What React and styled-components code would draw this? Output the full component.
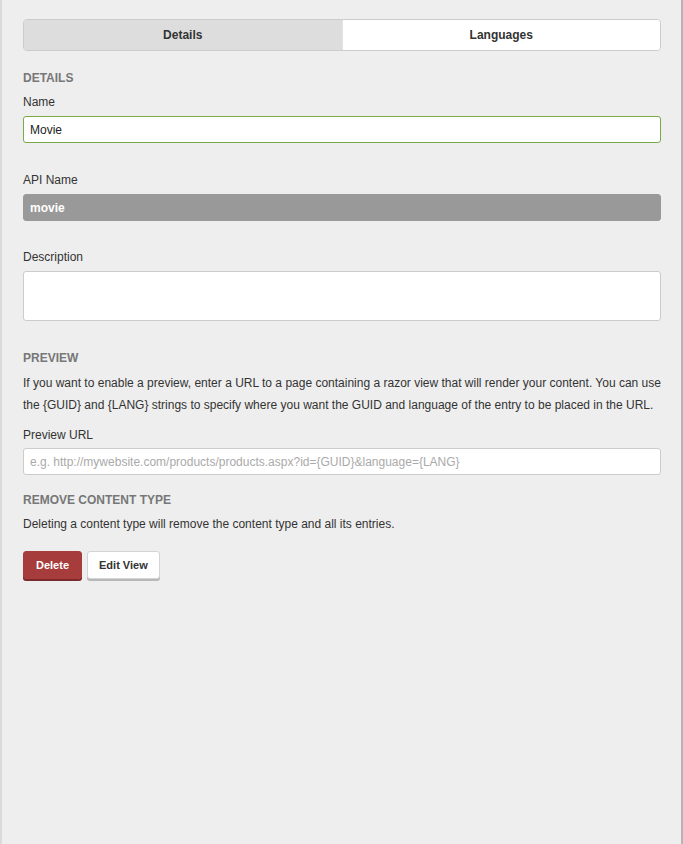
import React from "react";
import styled, { createGlobalStyle } from "styled-components";

const Global = createGlobalStyle`
  html, body { margin: 0; padding: 0; background: #eeeeee; }
  body { font-family: "Liberation Sans", Arial, Helvetica, sans-serif; color: #333; }
  * { box-sizing: border-box; }
`;

const Panel = styled.div`
  min-height: 844px;
  border-left: 2px solid #dadada;
  border-right: 2px solid #b4b4b4;
  padding: 19px 20px 20px 21px;
  background: #eeeeee;
`;

const Tabs = styled.div`
  display: flex;
  height: 32px;
  border: 1px solid #cccccc;
  border-radius: 4px;
  overflow: hidden;
`;

const Tab = styled.div`
  flex: 1;
  display: flex;
  align-items: center;
  justify-content: center;
  font-size: 12px;
  font-weight: bold;
  color: #333;
  background: ${(p) => (p.$active ? "#dddddd" : "#ffffff")};
  & + & { border-left: 1px solid #e2e2e2; }
`;

const Heading = styled.div`
  font-size: 12px;
  font-weight: bold;
  color: #777;
  line-height: 16px;
  margin-top: ${(p) => p.$mt}px;
`;

const Label = styled.div`
  font-size: 12px;
  color: #333;
  line-height: 16px;
  margin-top: ${(p) => p.$mt}px;
`;

const Field = styled.div`
  margin-top: ${(p) => p.$mt}px;
  height: ${(p) => p.$h || 27}px;
  border-radius: 3px;
  border: 1px solid ${(p) => p.$border || "#cccccc"};
  background: ${(p) => p.$bg || "#ffffff"};
  padding: 0 6px;
  display: flex;
  align-items: center;
  font-size: 12px;
  color: ${(p) => p.$color || "#222"};
  font-weight: ${(p) => (p.$bold ? "bold" : "normal")};
`;

const Paragraph = styled.p`
  margin: ${(p) => p.$mt}px 0 0;
  font-size: 12px;
  line-height: 22px;
  color: #333;
`;

const Text = styled.div`
  font-size: 12px;
  line-height: 16px;
  color: #333;
  margin-top: ${(p) => p.$mt}px;
`;

const Buttons = styled.div`
  display: flex;
  gap: 5px;
  margin-top: 19px;
`;

const Button = styled.button`
  height: 28px;
  padding: 0 ${(p) => (p.$danger ? 12 : 11)}px;
  border-radius: 3px;
  font-family: inherit;
  font-size: 11px;
  font-weight: bold;
  cursor: pointer;
  background: ${(p) => (p.$danger ? "#a63c3c" : "#ffffff")};
  color: ${(p) => (p.$danger ? "#ffffff" : "#333")};
  border: 1px solid ${(p) => (p.$danger ? "#a63c3c" : "#d4d4d4")};
  box-shadow: 0 2px 0 ${(p) => (p.$danger ? "#7a2a2a" : "#b8b8b8")};
`;

const previewText =
  "If you want to enable a preview, enter a URL to a page containing a razor view that will render your content. You can use the {GUID} and {LANG} strings to specify where you want the GUID and language of the entry to be placed in the URL.";
const urlPlaceholder =
  "e.g. http://mywebsite.com/products/products.aspx?id={GUID}&language={LANG}";

export default function App() {
  return (
    <>
      <Global />
      <Panel>
        <Tabs>
          <Tab $active>Details</Tab>
          <Tab>Languages</Tab>
        </Tabs>

        <Heading $mt={19}>DETAILS</Heading>
        <Label $mt={8}>Name</Label>
        <Field $mt={6} $border="#7aa84a">Movie</Field>

        <Label $mt={29}>API Name</Label>
        <Field $mt={6} $bg="#999999" $border="#999999" $color="#ffffff" $bold>
          movie
        </Field>

        <Label $mt={28}>Description</Label>
        <Field $mt={6} $h={50} />

        <Heading $mt={29}>PREVIEW</Heading>
        <Paragraph $mt={6}>{previewText}</Paragraph>

        <Label $mt={11}>Preview URL</Label>
        <Field $mt={5} $color="#aaaaaa">{urlPlaceholder}</Field>

        <Heading $mt={17}>REMOVE CONTENT TYPE</Heading>
        <Text $mt={8}>Deleting a content type will remove the content type and all its entries.</Text>

        <Buttons>
          <Button $danger>Delete</Button>
          <Button>Edit View</Button>
        </Buttons>
      </Panel>
    </>
  );
}
